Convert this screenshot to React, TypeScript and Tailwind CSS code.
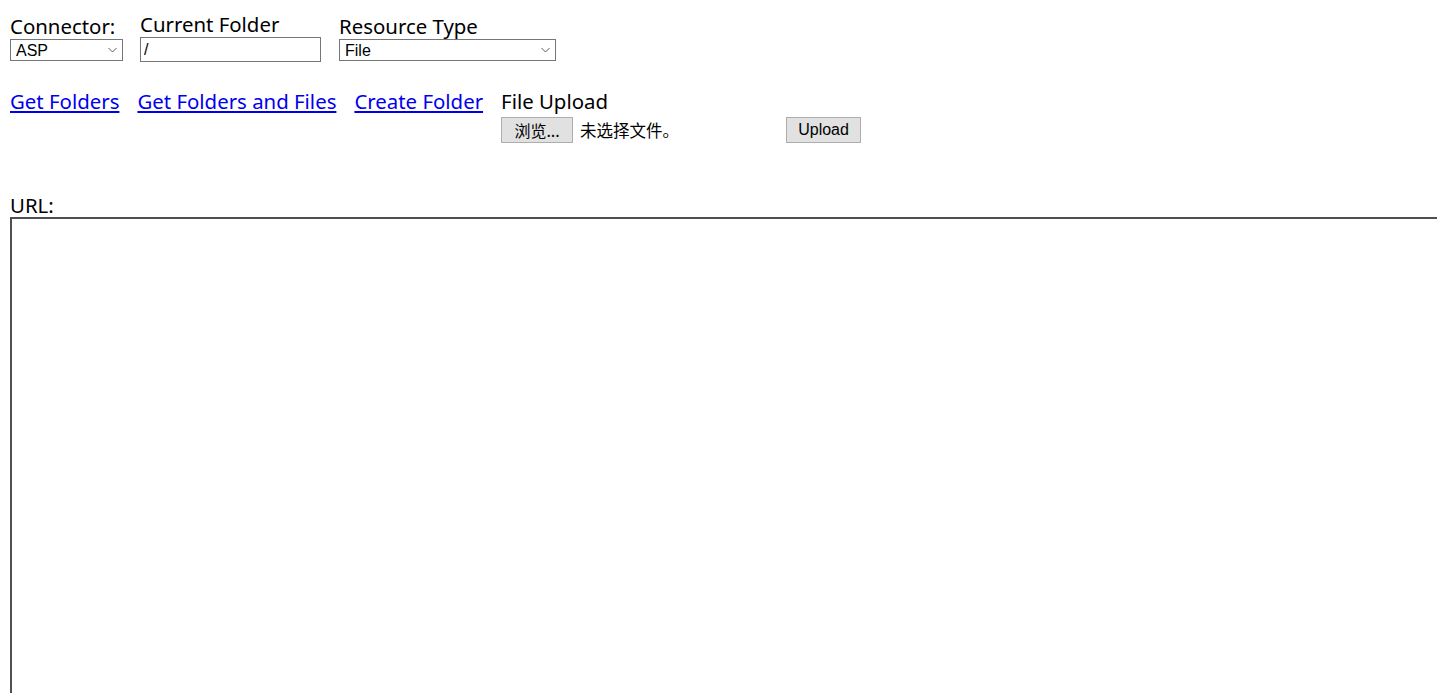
import React from 'react';

const Chevron = () => (
  <svg
    className="pointer-events-none absolute right-[6px] top-1/2 -translate-y-1/2"
    width="9"
    height="5"
    viewBox="0 0 9 5"
    fill="none"
  >
    <path d="M0.5 0.5 L4.5 4.5 L8.5 0.5" stroke="#5f5f5f" strokeWidth="1" />
  </svg>
);

const FakeSelect = ({ value, width }: { value: string; width: string }) => (
  <div className={`relative ${width}`}>
    <select
      defaultValue={value}
      className="block h-[22px] w-full appearance-none rounded-none border border-[#767676] bg-white pl-[5px] pt-[1px] text-[16px] leading-[20px] text-black outline-none"
      style={{ fontFamily: '"Liberation Sans", Arial, sans-serif' }}
    >
      <option>{value}</option>
    </select>
    <Chevron />
  </div>
);

const buttonClass =
  'h-[26px] border border-[#adadad] bg-[#e1e1e1] text-[16px] leading-[24px] text-black';

export default function App() {
  return (
    <div
      className="h-[693px] overflow-hidden bg-white px-[10px] pt-[11px] text-[20.4px] text-black"
      style={{ fontFamily: '"Noto Sans", "Open Sans", sans-serif' }}
    >
      {/* Connector / folder / type */}
      <div className="flex items-center">
        <div className="flex flex-col">
          <span className="leading-[26px]">Connector:</span>
          <FakeSelect value="ASP" width="w-[113px]" />
        </div>
        <div className="ml-[17px] flex flex-col">
          <span className="leading-[26px]">Current Folder</span>
          <input
            defaultValue="/"
            className="block h-[25px] w-[181px] rounded-none border border-[#767676] bg-white px-[3px] text-[16px] outline-none"
            style={{ fontFamily: '"Liberation Sans", Arial, sans-serif' }}
          />
        </div>
        <div className="ml-[18px] flex flex-col">
          <span className="leading-[26px]">Resource Type</span>
          <FakeSelect value="File" width="w-[217px]" />
        </div>
      </div>

      {/* Commands */}
      <div className="mt-[26px] flex items-start gap-[18px]">
        <a href="#" className="leading-[26px] text-[#0000ee] underline">
          Get Folders
        </a>
        <a href="#" className="leading-[26px] text-[#0000ee] underline">
          Get Folders and Files
        </a>
        <a href="#" className="leading-[26px] text-[#0000ee] underline">
          Create Folder
        </a>
        <div className="flex flex-col">
          <span className="leading-[26px]">File Upload</span>
          <div className="mt-[3px] flex h-[26px] items-center">
            <div className="flex w-[285px] items-center">
              <button
                className={`${buttonClass} w-[72px]`}
                style={{ fontFamily: '"Noto Sans CJK SC", "Liberation Sans", sans-serif' }}
              >
                浏览...
              </button>
              <span
                className="ml-[7px] text-[16.5px] leading-[24px]"
                style={{ fontFamily: '"Noto Sans CJK SC", sans-serif' }}
              >
                未选择文件。
              </span>
            </div>
            <button
              className={`${buttonClass} w-[75px]`}
              style={{ fontFamily: '"Liberation Sans", Arial, sans-serif' }}
            >
              Upload
            </button>
          </div>
        </div>
      </div>

      {/* Result frame */}
      <div className="mt-[50px] leading-[24px]">URL:</div>
      <div className="h-[600px] w-[1500px] border-2 border-[#4f4f4f] bg-white" />
    </div>
  );
}
